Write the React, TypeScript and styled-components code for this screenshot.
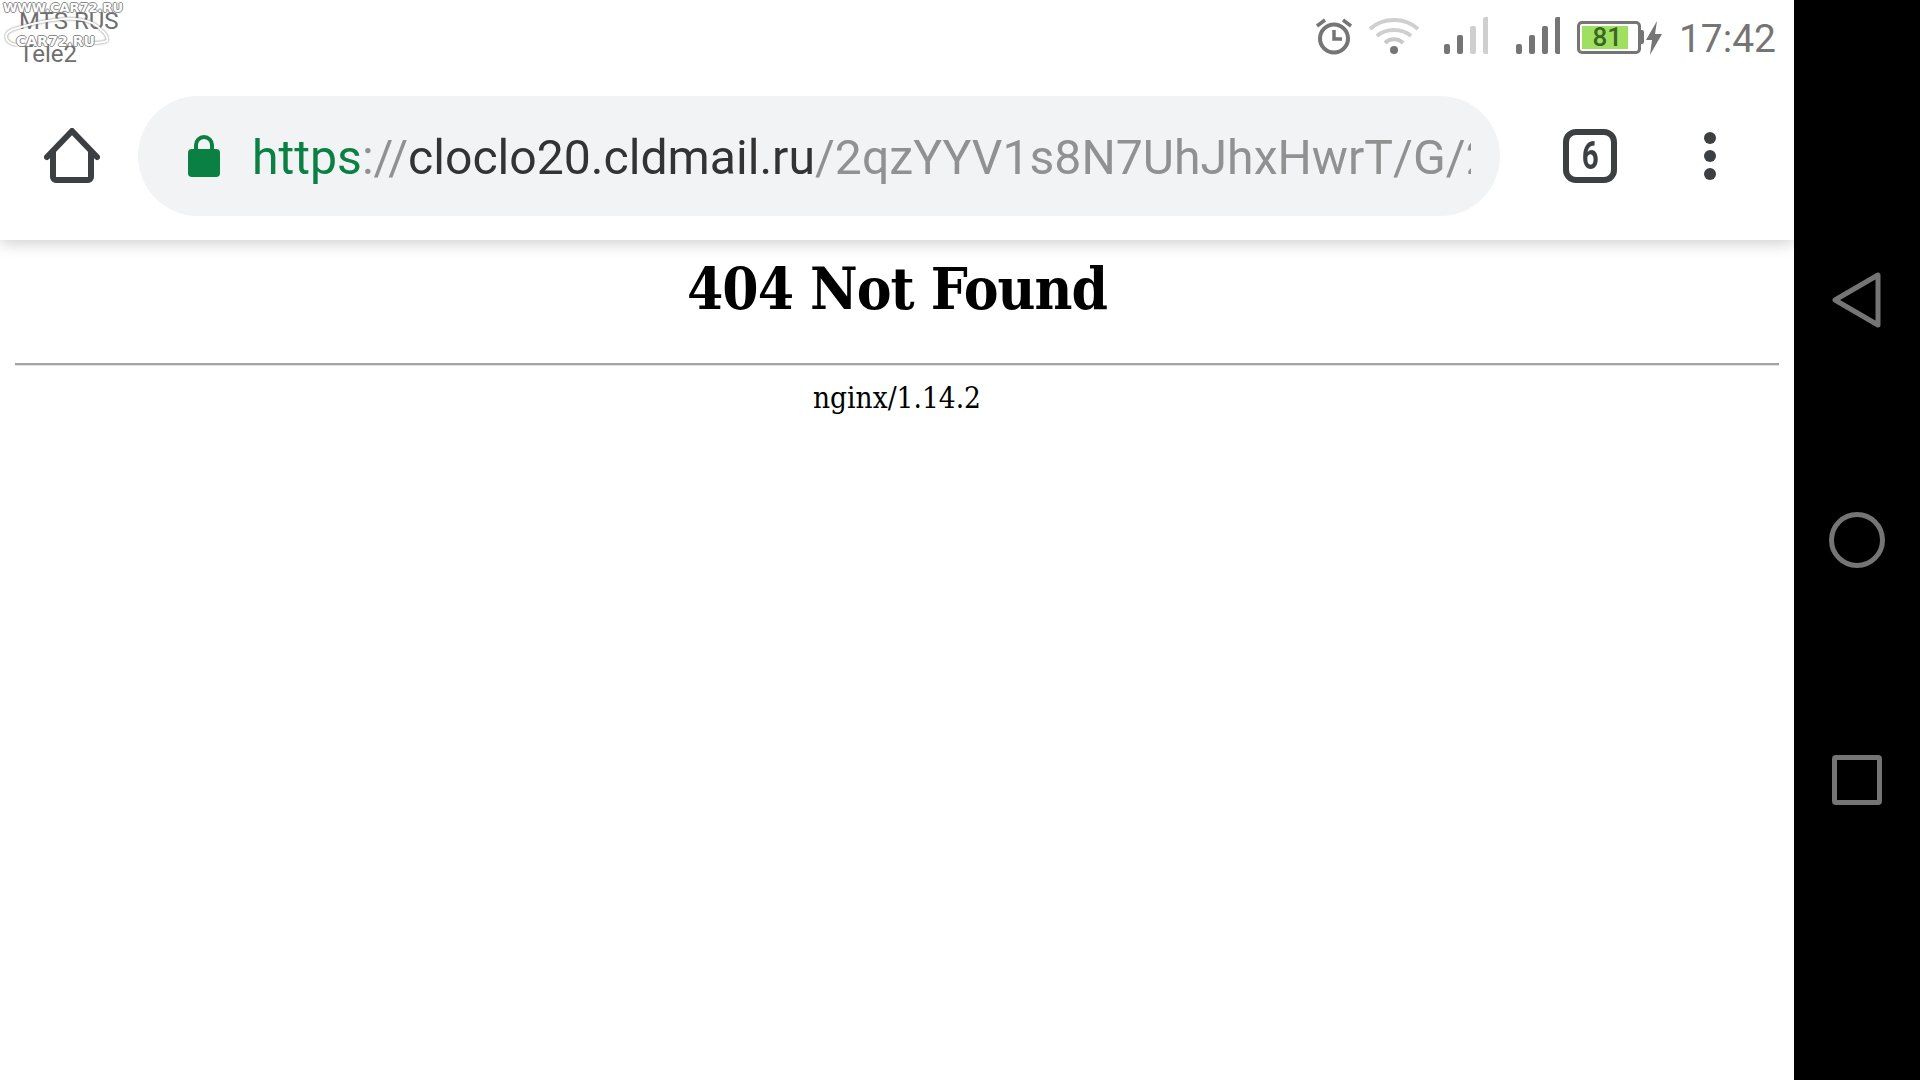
import React from "react";
import styled, { createGlobalStyle } from "styled-components";

const GlobalStyle = createGlobalStyle`
  html, body {
    margin: 0;
    padding: 0;
    background: #000;
  }
`;

const Screen = styled.div`
  position: relative;
  display: flex;
  width: 1920px;
  height: 1080px;
  overflow: hidden;
`;

const Phone = styled.div`
  width: 1794px;
  display: flex;
  flex-direction: column;
  background: #fff;
`;

const Chrome = styled.header`
  position: relative;
  height: 240px;
  background: #fff;
  box-shadow: 0 2px 16px rgba(0, 0, 0, 0.22);
`;

const StatusBar = styled.div`
  height: 96px;
  display: flex;
  justify-content: space-between;
  padding: 5px 18px 0 19px;
  box-sizing: border-box;
  font-family: Roboto, sans-serif;
  color: #757575;
`;

const Carriers = styled.div`
  font-size: 24px;
  line-height: 33px;
  color: #6e6e6e;
`;

const StatusIcons = styled.div`
  display: flex;
  align-items: flex-start;
  padding-top: 12px;
`;

const Clock = styled.span`
  font-size: 39px;
  line-height: 40px;
  margin-left: 17px;
  margin-top: 2px;
`;

const Battery = styled.div`
  position: relative;
  box-sizing: border-box;
  width: 64px;
  height: 33px;
  margin: 4px 0 0 17px;
  border: 3px solid #757575;
  border-radius: 5px;
  padding: 2px;
  display: flex;
`;

const BatteryFill = styled.div`
  width: 46px;
  padding-left: 5px;
  box-sizing: border-box;
  background: #a0e060;
  color: #3a6626;
  font-size: 26px;
  line-height: 23px;
  font-weight: 500;
  text-align: center;
`;

const BatteryCap = styled.div`
  position: absolute;
  right: -6px;
  top: 6px;
  width: 3px;
  height: 14px;
  background: #757575;
  border-radius: 0 2px 2px 0;
`;

const Toolbar = styled.div`
  height: 120px;
  display: flex;
  align-items: center;
`;

const IconCell = styled.div<{ $width: number; $shift?: number }>`
  width: ${(p) => p.$width}px;
  flex: none;
  display: flex;
  align-items: center;
  justify-content: center;
  padding-left: ${(p) => p.$shift ?? 0}px;
  box-sizing: border-box;
`;

const Omnibox = styled.div`
  width: 1362px;
  height: 120px;
  flex: none;
  box-sizing: border-box;
  padding: 0 29px 0 50px;
  display: flex;
  align-items: center;
  background: #f1f3f4;
  border-radius: 60px;
`;

const Url = styled.div`
  margin-left: 32px;
  padding-top: 3px;
  flex: 1;
  overflow: hidden;
  white-space: nowrap;
  font-family: Roboto, sans-serif;
  font-size: 48.15px;
  line-height: 60px;
  color: #919191;
`;

const UrlPart = styled.span<{ $color: string }>`
  color: ${(p) => p.$color};
`;

const TabCount = styled.div`
  box-sizing: border-box;
  width: 54px;
  height: 54px;
  border: 6px solid #3c4043;
  border-radius: 13px;
  display: flex;
  align-items: center;
  justify-content: center;
  font-family: Roboto, sans-serif;
  font-weight: 700;
  font-size: 39px;
  color: #3c4043;
`;

const TabDigit = styled.span`
  display: block;
  transform: scaleX(0.76);
`;

const Dots = styled.div`
  display: flex;
  flex-direction: column;
  gap: 6px;
`;

const Dot = styled.div`
  width: 12px;
  height: 12px;
  border-radius: 50%;
  background: #3c4043;
`;

const Page = styled.main`
  flex: 1;
  padding: 0 15px;
  text-align: center;
  font-family: "DejaVu Serif Condensed", "DejaVu Serif", serif;
  color: #000;
`;

const Title = styled.h1`
  margin: 16px 0 0;
  font-size: 58px;
  line-height: 66px;
  font-weight: 700;
  letter-spacing: -1px;
`;

const Rule = styled.hr`
  margin: 41px 0 0;
  height: 2px;
  border: 0;
  border-bottom: 1px solid #e2e2e2;
  background: #a4a4a4;
  box-sizing: content-box;
`;

const Server = styled.div`
  margin-top: 14px;
  font-size: 29.5px;
  line-height: 36px;
`;

const NavBar = styled.nav`
  width: 126px;
  background: #000;
  display: flex;
  flex-direction: column;
  align-items: center;
  padding-top: 272px;
  gap: 184px;
`;

const Watermark = styled.div`
  position: absolute;
  left: 3px;
  top: 0;
  width: 122px;
  height: 64px;
  font-family: "DejaVu Sans", sans-serif;
  font-weight: 700;
  color: #fff;
  font-size: 13px;
  line-height: 15px;
  text-shadow: 1px 0 0 #8a8a8a, -1px 0 0 #8a8a8a, 0 1px 0 #8a8a8a, 0 -1px 0 #8a8a8a;
  white-space: nowrap;
`;

const WatermarkSub = styled.div`
  position: absolute;
  left: 13px;
  top: 34px;
  font-size: 14px;
`;

const WatermarkCar = styled.svg`
  position: absolute;
  left: 0;
  top: 0;
`;

const AlarmIcon = () => (
  <svg width="38" height="38" viewBox="0 0 38 38" fill="none" stroke="#757575">
    <circle cx="19" cy="21.5" r="14" strokeWidth="4" />
    <path d="M19 13v9h8" strokeWidth="3.5" />
    <path d="M2 9l8-6M36 9l-8-6" strokeWidth="3.5" />
  </svg>
);

const WifiIcon = () => (
  <svg width="52" height="38" viewBox="0 0 52 38" fill="none" stroke="#cfcfcf" strokeWidth="4" style={{ marginLeft: 15 }}>
    <path d="M2 12C15 0 37 0 50 12" />
    <path d="M9 19C18 11 34 11 43 19" />
    <path d="M17 26C22 21 30 21 35 26" stroke="#c8c8c8" />
    <circle cx="26" cy="33" r="4" fill="#757575" stroke="none" />
  </svg>
);

const SignalIcon = ({ active, gap }: { active: number; gap: number }) => {
  const bars = [
    { x: 0, h: 10 },
    { x: 13, h: 19 },
    { x: 26, h: 28 },
    { x: 39, h: 37 },
  ];
  return (
    <svg width="44" height="38" viewBox="0 0 44 38" style={{ marginLeft: gap }}>
      {bars.map((b, i) => (
        <rect
          key={b.x}
          x={b.x}
          y={37 - b.h}
          width="6"
          height={b.h}
          rx="2"
          fill={i < active ? "#757575" : "#cfcfcf"}
        />
      ))}
    </svg>
  );
};

const BoltIcon = () => (
  <svg width="16" height="34" viewBox="0 0 16 34" fill="#757575" style={{ marginLeft: 5, marginTop: 4 }}>
    <path d="M11 0L0 19h6L4 34 16 13H9z" />
  </svg>
);

const HomeIcon = () => (
  <svg width="56" height="56" viewBox="0 0 56 56" fill="none" stroke="#3c4043" strokeWidth="6" strokeLinejoin="round" strokeLinecap="round">
    <path d="M3 29L28 3l25 26" />
    <path d="M9 24v25a3 3 0 0 0 3 3h32a3 3 0 0 0 3-3V24" />
  </svg>
);

const LockIcon = () => (
  <svg width="32" height="42" viewBox="0 0 32 42" fill="#0b8043">
    <path d="M8 16v-6a8 8 0 0 1 16 0v6" fill="none" stroke="#0b8043" strokeWidth="4" />
    <rect x="0" y="14" width="32" height="28" rx="4" />
  </svg>
);

const BackIcon = () => (
  <svg width="50" height="56" viewBox="0 0 50 56" fill="none" stroke="#757575" strokeWidth="5" strokeLinejoin="round">
    <path d="M3 28L46 3v50z" />
  </svg>
);

const HomeNavIcon = () => (
  <svg width="56" height="56" viewBox="0 0 56 56" fill="none" stroke="#757575" strokeWidth="5">
    <circle cx="28" cy="28" r="25.5" />
  </svg>
);

const RecentsIcon = () => (
  <svg width="50" height="56" viewBox="0 0 50 56" fill="none" stroke="#757575" strokeWidth="5" strokeLinejoin="round">
    <rect x="2.5" y="5.5" width="45" height="45" rx="1.5" />
  </svg>
);

export default function App() {
  return (
    <Screen>
      <GlobalStyle />
      <Phone>
        <Chrome>
          <StatusBar>
            <Carriers>
              MTS RUS
              <br />
              Tele2
            </Carriers>
            <StatusIcons>
              <AlarmIcon />
              <WifiIcon />
              <SignalIcon active={2} gap={24} />
              <SignalIcon active={4} gap={28} />
              <Battery>
                <BatteryFill>81</BatteryFill>
                <BatteryCap />
              </Battery>
              <BoltIcon />
              <Clock>17:42</Clock>
            </StatusIcons>
          </StatusBar>
          <Toolbar>
            <IconCell $width={138} $shift={6}>
              <HomeIcon />
            </IconCell>
            <Omnibox>
              <LockIcon />
              <Url>
                <UrlPart $color="#0b8043">https</UrlPart>
                ://
                <UrlPart $color="#333">cloclo20.cldmail.ru</UrlPart>
                /2qzYYV1s8N7UhJhxHwrT/G/2xK9fLm
              </Url>
            </Omnibox>
            <IconCell $width={180}>
              <TabCount>
                <TabDigit>6</TabDigit>
              </TabCount>
            </IconCell>
            <IconCell $width={57} $shift={2}>
              <Dots>
                <Dot />
                <Dot />
                <Dot />
              </Dots>
            </IconCell>
          </Toolbar>
        </Chrome>
        <Page>
          <Title>404 Not Found</Title>
          <Rule />
          <Server>nginx/1.14.2</Server>
        </Page>
      </Phone>
      <NavBar>
        <BackIcon />
        <HomeNavIcon />
        <RecentsIcon />
      </NavBar>
      <Watermark>
        WWW.CAR72.RU
        <WatermarkCar width="122" height="64" viewBox="0 0 122 64" fill="none" stroke="#fff" strokeWidth="2" style={{ filter: "drop-shadow(0 0 1px #777)" }}>
          <path d="M3 36C4 31 10 29 18 27C32 23 44 20 60 19C76 18 90 20 98 30C103 33 105 38 104 41C99 43 93 43 89 43" />
          <path d="M3 36C3 41 8 44 14 45" />
        </WatermarkCar>
        <WatermarkSub>CAR72.RU</WatermarkSub>
      </Watermark>
    </Screen>
  );
}
